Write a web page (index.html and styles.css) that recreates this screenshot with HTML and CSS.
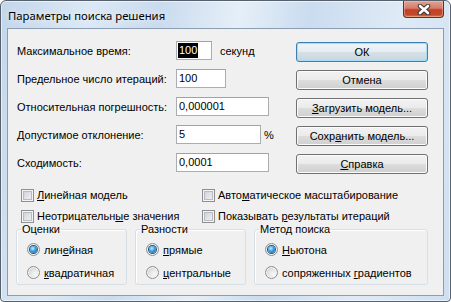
FILE: index.html
```html
<!DOCTYPE html>
<html lang="ru">
<head>
    <meta charset="UTF-8">
    <title>Параметры поиска решения</title>
    <link rel="stylesheet" href="styles.css">
</head>
<body>
    <div class="window">
        <div class="titlebar">
            <span class="title">Параметры поиска решения</span>
            <button class="close-btn" aria-label="Закрыть">
                <svg width="16" height="11" viewBox="0 0 16 11">
                    <path d="M4 2 L12 9 M12 2 L4 9" stroke="#3a3a3a" stroke-width="4.6" stroke-linecap="round" fill="none"/>
                    <path d="M4 2 L12 9 M12 2 L4 9" stroke="#ffffff" stroke-width="2.6" stroke-linecap="round" fill="none"/>
                </svg>
            </button>
        </div>

        <div class="client">
            <div class="top">
                <div class="fields">
                    <div class="row">
                        <span class="label">Максимальное время:</span>
                        <div class="field w-time"><span class="sel">100</span></div>
                        <span class="unit">секунд</span>
                    </div>
                    <div class="row">
                        <span class="label">Предельное число итераций:</span>
                        <div class="field w-iter">100</div>
                    </div>
                    <div class="row">
                        <span class="label">Относительная погрешность:</span>
                        <div class="field w-wide">0,000001</div>
                    </div>
                    <div class="row">
                        <span class="label">Допустимое отклонение:</span>
                        <div class="field w-tol">5</div>
                        <span class="unit pct">%</span>
                    </div>
                    <div class="row">
                        <span class="label">Сходимость:</span>
                        <div class="field w-wide">0,0001</div>
                    </div>
                </div>

                <div class="buttons">
                    <button class="btn default">ОК</button>
                    <button class="btn">Отмена</button>
                    <button class="btn"><u>З</u>агрузить модель...</button>
                    <button class="btn">Сохр<u>а</u>нить модель...</button>
                    <button class="btn"><u>С</u>правка</button>
                </div>
            </div>

            <div class="checks">
                <label class="check"><span class="box"></span><span><u>Л</u>инейная модель</span></label>
                <label class="check"><span class="box"></span><span>Авто<u>м</u>атическое масштабирование</span></label>
                <label class="check"><span class="box"></span><span>Неотрицательн<u>ы</u>е значения</span></label>
                <label class="check"><span class="box"></span><span>Показывать <u>р</u>езультаты итераций</span></label>
            </div>

            <div class="groups">
                <fieldset class="group g-small">
                    <legend>Оценки</legend>
                    <label class="opt"><span class="radio on"></span><span>лин<u>е</u>йная</span></label>
                    <label class="opt"><span class="radio"></span><span><u>к</u>вадратичная</span></label>
                </fieldset>
                <fieldset class="group g-small">
                    <legend>Разности</legend>
                    <label class="opt"><span class="radio on"></span><span><u>п</u>рямые</span></label>
                    <label class="opt"><span class="radio"></span><span><u>ц</u>ентральные</span></label>
                </fieldset>
                <fieldset class="group g-wide">
                    <legend>Метод поиска</legend>
                    <label class="opt"><span class="radio on"></span><span><u>Н</u>ьютона</span></label>
                    <label class="opt"><span class="radio"></span><span>сопряженных <u>г</u>радиентов</span></label>
                </fieldset>
            </div>
        </div>
    </div>
</body>
</html>
```

FILE: styles.css
```css
* {
    margin: 0;
    padding: 0;
    box-sizing: border-box;
}

body {
    width: 451px;
    height: 302px;
    background: #ffffff;
    font-family: "Liberation Sans", Arial, sans-serif;
    font-size: 11px;
    color: #000;
}

u {
    text-decoration: underline;
    text-underline-offset: 1px;
}

/* window frame */
.window {
    width: 451px;
    height: 302px;
    border: 1px solid #56616d;
    border-radius: 6px 6px 4px 4px;
    padding: 0 6px 5px 6px;
    display: flex;
    flex-direction: column;
    background: linear-gradient(100deg, #c3d6ea 0%, #dce8f5 18%, #c9dbee 32%, #e6eff8 48%, #cadcef 62%, #dfeaf6 80%, #cfdff0 100%);
    box-shadow: inset 0 0 0 1px rgba(255, 255, 255, 0.55);
}

.titlebar {
    height: 27px;
    display: flex;
    align-items: flex-start;
    justify-content: space-between;
}

.title {
    margin: 7px 0 0 1px;
    font-family: "Noto Sans", "Open Sans", sans-serif;
    font-size: 11.3px;
    line-height: 15px;
    color: #000;
    text-shadow: 0 0 6px rgba(255, 255, 255, 0.9);
}

.close-btn {
    width: 41px;
    height: 17px;
    border: 1px solid #6a2b20;
    border-top: none;
    border-radius: 0 0 4px 4px;
    background: linear-gradient(#e3a192 0%, #d47d69 45%, #c04128 55%, #c4472b 85%, #dc7b4f 100%);
    box-shadow: inset 0 0 0 1px rgba(255, 215, 200, 0.4);
    display: flex;
    align-items: center;
    justify-content: center;
}

.close-btn svg {
    display: block;
}

/* client area */
.client {
    flex: 1;
    border: 1px solid #8a9db2;
    background: #f0f0f0;
    display: flex;
    flex-direction: column;
}

.top {
    display: flex;
    justify-content: space-between;
}

.fields {
    padding: 12px 0 0 9px;
    display: flex;
    flex-direction: column;
    gap: 9px;
}

.row {
    height: 19px;
    display: flex;
    align-items: center;
}

.label {
    width: 159px;
}

.field {
    height: 19px;
    border: 1px solid #abadb3;
    border-top-color: #9ea3aa;
    background: #fff;
    padding: 0 2px;
    line-height: 17px;
}

.w-time { width: 36px; padding-left: 1px; }
.w-iter { width: 50px; }
.w-wide { width: 93px; }
.w-tol  { width: 85px; }

.sel {
    display: inline-block;
    background: #000;
    color: #fff;
    line-height: 15px;
    padding: 0 1px;
}

.unit {
    margin-left: 8px;
}

.unit.pct {
    margin-left: 3px;
}

.buttons {
    padding: 13px 15px 0 0;
    display: flex;
    flex-direction: column;
    gap: 8px;
}

.btn {
    width: 132px;
    height: 20px;
    border: 1px solid #707070;
    border-radius: 3px;
    background: linear-gradient(#f2f2f2 0%, #ebebeb 48%, #dddddd 52%, #cfcfcf 100%);
    box-shadow: inset 0 0 0 1px #fbfbfb;
    font: inherit;
    color: #000;
    line-height: 16px;
}

.btn.default {
    border-color: #3c7fb1;
    box-shadow: inset 0 0 0 1px #a7dcf6;
    background: linear-gradient(#eef4f8 0%, #e6edf2 48%, #d6e0e7 52%, #c9d5de 100%);
}

/* checkboxes */
.checks {
    margin-top: 14px;
    padding-left: 13px;
    display: grid;
    grid-template-columns: 181px 1fr;
    row-gap: 7px;
}

.check {
    height: 14px;
    display: flex;
    align-items: center;
}

.box {
    width: 13px;
    height: 13px;
    margin-right: 3px;
    border: 1px solid #8e8f8f;
    background: linear-gradient(135deg, #c6cbd2 0%, #e2e4e8 55%, #f6f6f6 100%);
    box-shadow: inset 0 0 0 1px #f4f4f4, inset 0 0 0 2px #b8bcc2;
}

/* option groups */
.groups {
    padding-left: 8px;
    display: flex;
    gap: 8px;
}

.group {
    height: 62px;
    border: 1px solid #d5dfe5;
    border-radius: 3px;
    padding: 6px 0 3px 10px;
    display: flex;
    flex-direction: column;
    gap: 8px;
    box-shadow: 1px 1px 0 #ffffff inset;
}

.g-small { width: 111px; }
.g-wide  { width: 174px; }

.group legend {
    margin-left: -6px;
    padding: 0 1px;
    line-height: 13px;
}

.opt {
    height: 15px;
    display: flex;
    align-items: center;
}

.radio {
    width: 13px;
    height: 13px;
    margin-right: 4px;
    border-radius: 50%;
    border: 1px solid #8e8f8f;
    background: radial-gradient(circle at 65% 65%, #f8f8f8 0%, #e4e4e4 45%, #c9c9c9 80%, #e9e9e9 100%);
    box-shadow: inset 0 0 0 1px #f7f7f7;
    display: flex;
    align-items: center;
    justify-content: center;
}

.radio.on::after {
    content: "";
    width: 7px;
    height: 7px;
    border-radius: 50%;
    background: radial-gradient(circle at 40% 35%, #c9ecff 0%, #3e9ee0 45%, #195f96 100%);
    box-shadow: 0 0 0 1px #1d5a86;
}
```
